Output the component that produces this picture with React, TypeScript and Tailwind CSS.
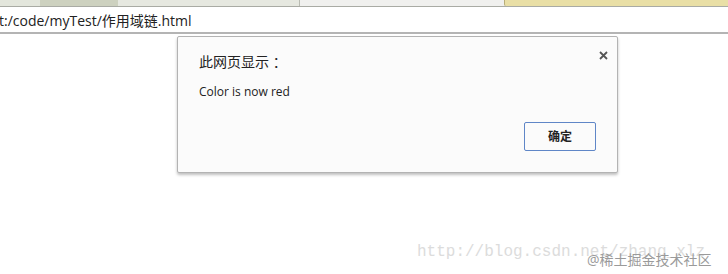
export default function App() {
  return (
    <div className="relative h-[274px] w-[728px] overflow-hidden bg-white font-['Open_Sans','Noto_Sans_CJK_SC',sans-serif]">
      {/* tab strip */}
      <div className="flex h-[7px] border-b border-[#a9aba4] bg-[#e9ebe3]">
        <div className="w-[40px] bg-[#e3e6dc]" />
        <div className="w-[78px] bg-[#cdd1bf]" />
        <div className="w-[182px] border-r border-[#b9bbb2] bg-[#e6e8e0]" />
        <div className="w-[204px] bg-[#f0f0ee]" />
        <div className="flex-1 rounded-bl-[2px] border-l border-[#b8ad78] bg-[#e9dfa6]" />
      </div>

      {/* address bar */}
      <div className="flex h-[27px] items-center border-b-2 border-[#b4b4b4] bg-white pt-[3px]">
        <span className="-ml-[1px] whitespace-nowrap text-[14px] leading-none text-[#222]">
          t:/code/myTest/作用域链.html
        </span>
      </div>

      {/* watermark */}
      <div className="absolute left-[417px] top-[244px] whitespace-nowrap font-['Liberation_Mono',monospace] text-[16px] leading-none text-[#dcdcdc]">
        http://blog.csdn.net/zhang_xlz
      </div>
      <div className="absolute left-[587px] top-[253px] whitespace-nowrap text-[14px] leading-none text-[#9a9a9a]">
        @稀土掘金技术社区
      </div>

      {/* alert dialog */}
      <div className="absolute left-[177px] top-[36px] flex h-[137px] w-[441px] flex-col rounded-[2px] border border-[#b3b3b3] bg-[#fbfbfb] shadow-[0_2px_3px_rgba(0,0,0,0.25)]">
        <div className="flex items-start justify-between pl-[21px] pr-[9px] pt-[15px]">
          <span className="text-[14px] leading-[20px] text-[#222]">此网页显示 ：</span>
          <svg width="9" height="9" viewBox="0 0 9 9" className="mt-[-1px]">
            <path d="M1 1L8 8M8 1L1 8" stroke="#555" strokeWidth="1.8" />
          </svg>
        </div>
        <div className="mt-[12px] pl-[21px] text-[12px] leading-[16px] text-[#222]">
          Color is now red
        </div>
        <div className="mt-auto flex justify-end pb-[21px] pr-[21px]">
          <button className="h-[29px] w-[72px] rounded-[2px] border border-[#5f86c7] bg-[#fbfbfb] text-[12px] font-bold text-[#222]">
            确定
          </button>
        </div>
      </div>
    </div>
  );
}
